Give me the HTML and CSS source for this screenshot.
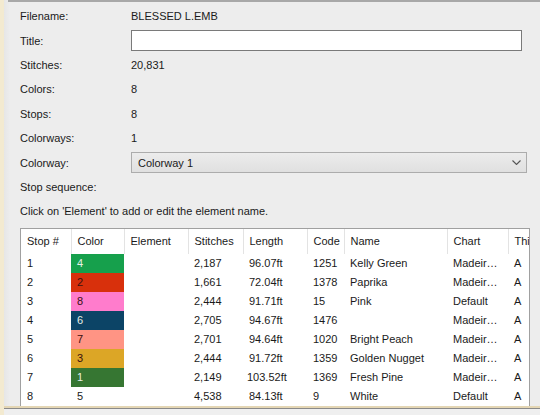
FILE: index.html
```html
<!DOCTYPE html>
<html>
<head>
<meta charset="utf-8">
<link rel="stylesheet" href="styles.css">
</head>
<body>
<div class="window">
  <div class="form">
    <div class="row"><span class="label">Filename:</span><span class="value">BLESSED L.EMB</span></div>
    <div class="row"><span class="label">Title:</span><span class="input"></span></div>
    <div class="row"><span class="label">Stitches:</span><span class="value">20,831</span></div>
    <div class="row"><span class="label">Colors:</span><span class="value">8</span></div>
    <div class="row"><span class="label">Stops:</span><span class="value">8</span></div>
    <div class="row"><span class="label">Colorways:</span><span class="value">1</span></div>
    <div class="row"><span class="label">Colorway:</span><span class="combo"><span>Colorway 1</span><svg class="chev" width="9" height="5" viewBox="0 0 9 5"><path d="M0.5 0.5 L4.5 4.5 L8.5 0.5" fill="none" stroke="#555" stroke-width="1.1"/></svg></span></div>
    <div class="row"><span class="label">Stop sequence:</span></div>
    <div class="row"><span class="label">Click on 'Element' to add or edit the element name.</span></div>
  </div>
  <div class="tablebox">
    <table>
      <thead>
        <tr><th class="c1">Stop #</th><th class="c2">Color</th><th class="c3">Element</th><th class="c4">Stitches</th><th class="c5">Length</th><th class="c6">Code</th><th class="c7">Name</th><th class="c8">Chart</th><th class="c9">Thi</th></tr>
      </thead>
      <tbody>
        <tr><td>1</td><td class="sw g1 lt">4</td><td></td><td>2,187</td><td>96.07ft</td><td>1251</td><td>Kelly Green</td><td>Madeir…</td><td>A</td></tr>
        <tr><td>2</td><td class="sw rd">2</td><td></td><td>1,661</td><td>72.04ft</td><td>1378</td><td>Paprika</td><td>Madeir…</td><td>A</td></tr>
        <tr><td>3</td><td class="sw pk">8</td><td></td><td>2,444</td><td>91.71ft</td><td>15</td><td>Pink</td><td>Default</td><td>A</td></tr>
        <tr><td>4</td><td class="sw nv lt">6</td><td></td><td>2,705</td><td>94.67ft</td><td>1476</td><td></td><td>Madeir…</td><td>A</td></tr>
        <tr><td>5</td><td class="sw pc">7</td><td></td><td>2,701</td><td>94.64ft</td><td>1020</td><td>Bright Peach</td><td>Madeir…</td><td>A</td></tr>
        <tr><td>6</td><td class="sw gd">3</td><td></td><td>2,444</td><td>91.72ft</td><td>1359</td><td>Golden Nugget</td><td>Madeir…</td><td>A</td></tr>
        <tr><td>7</td><td class="sw fp lt">1</td><td></td><td>2,149</td><td class="wide">103.52ft</td><td>1369</td><td>Fresh Pine</td><td>Madeir…</td><td>A</td></tr>
        <tr><td>8</td><td class="plain">5</td><td></td><td>4,538</td><td>84.13ft</td><td>9</td><td>White</td><td>Default</td><td>A</td></tr>
      </tbody>
    </table>
  </div>
  <div class="footer"></div>
</div>
</body>
</html>
```
FILE: styles.css
```css
html, body {
  margin: 0;
  padding: 0;
}
body {
  width: 540px;
  height: 415px;
  overflow: hidden;
  background: #ececec;
  font-family: "Liberation Sans", Arial, sans-serif;
  font-size: 11px;
  color: #1a1a1a;
}
.window {
  height: 415px;
  display: flex;
  flex-direction: column;
  border-left: 4px solid #f3ead0;
  box-sizing: border-box;
  background: linear-gradient(to right, #e6e6e6 0, #ededed 6px, #ededed 100%);
}
.form {
  border-top: 2px solid #a8a8a8;
  margin-left: 4px;
  padding: 2px 0 0 12px;
  display: flex;
  flex-direction: column;
}
.row {
  height: 24.4px;
  display: flex;
  align-items: center;
}
.label {
  width: 111px;
  white-space: nowrap;
}
.input {
  width: 391px;
  height: 21px;
  box-sizing: border-box;
  border: 1px solid #7a7a7a;
  background: #fff;
}
.combo {
  width: 396px;
  height: 21px;
  box-sizing: border-box;
  border: 1px solid #acacac;
  background: linear-gradient(#ececec, #e0e0e0);
  display: flex;
  align-items: center;
  justify-content: space-between;
  padding: 0 5px 0 6px;
}
.chev {
  display: block;
}
.tablebox {
  margin: 4px 10px 0 16px;
  height: 177px;
  border: 1px solid #a0a0a0;
  border-bottom: none;
  background: #fff;
  overflow: hidden;
}
table {
  border-collapse: collapse;
  table-layout: fixed;
  width: 527px;
}
th, td {
  box-sizing: border-box;
}
th {
  font-weight: normal;
  text-align: left;
  height: 25px;
  padding: 0 0 0 6px;
  border-right: 1px solid #e3e3e3;
  white-space: nowrap;
  overflow: hidden;
}
td {
  height: 19px;
  padding: 0 0 0 6px;
  white-space: nowrap;
  overflow: hidden;
}
.c1 { width: 50px; }
.c2 { width: 53px; }
.c3 { width: 64px; }
.c4 { width: 55px; }
.c5 { width: 64px; }
.c6 { width: 37px; }
.c7 { width: 103px; }
.c8 { width: 61px; }
.c9 { width: 40px; }
td.wide {
  padding-left: 4px;
}
td.sw {
  color: #3a1010;
}
td.lt {
  color: #e8f0e8;
}
.g1 { background: #16a04c; }
.rd { background: #d8300c; }
.pk { background: #ff7ccc; }
.nv { background: #0c4466; }
.pc { background: #ff9484; }
.gd { background: #dca626; }
.fp { background: #367632; }
.footer {
  flex: 1;
  border-top: 2px solid #e4d6b4;
  box-shadow: inset 0 1px 0 #8a8a8a;
  background: #efefef;
}
```
